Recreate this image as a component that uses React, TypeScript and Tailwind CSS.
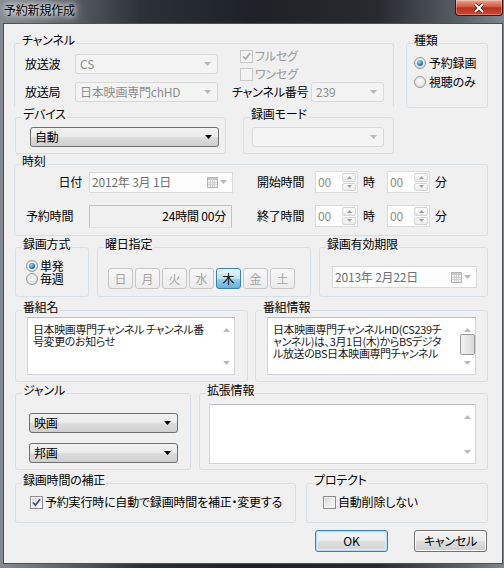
import type { ReactNode } from "react";

function Group({ label, className, children }: { label: string; className: string; children?: ReactNode }) {
  return (
    <fieldset className={`rounded-[3px] border border-[#d5dfe5] ${className}`}>
      <legend className="ml-[6px] px-[1px] pb-[6px] leading-[14px]">{label}</legend>
      {children}
    </fieldset>
  );
}

function Arrow({ dark, up }: { dark?: boolean; up?: boolean }) {
  return (
    <svg width="7" height="4" viewBox="0 0 7 4">
      <path d={up ? "M0 4h7L3.5 0z" : "M0 0h7L3.5 4z"} fill={dark ? "#000" : "#b8b8b8"} />
    </svg>
  );
}

function Combo({ value, className, enabled }: { value?: string; className: string; enabled?: boolean }) {
  return (
    <div
      className={`flex h-[20px] items-center rounded-[3px] border pl-[4px] pr-[6px] ${
        enabled
          ? "border-[#707070] bg-[linear-gradient(#f2f2f2,#ebebeb_50%,#dddddd_50%,#cfcfcf)] text-black"
          : "border-[#d9d9d9] bg-[#f4f4f4] text-[#8d8d8d]"
      } ${className}`}
    >
      <span className="flex-1 leading-[14px]">{value}</span>
      <Arrow dark={enabled} />
    </div>
  );
}

function DatePick({ value, className }: { value: string; className: string }) {
  return (
    <div className={`flex h-[21px] items-center border border-[#d9d9d9] bg-[#fcfcfc] pl-[2px] pr-[5px] text-[#707070] ${className}`}>
      <span className="flex-1 leading-[14px]">{value}</span>
      <svg width="11" height="11" viewBox="0 0 11 11">
        <rect x="0.5" y="0.5" width="10" height="10" fill="#f2f2f2" stroke="#b5b5b5" />
        <rect x="1" y="1" width="9" height="2" fill="#c9c9c9" />
        <path d="M1 5.5h9M1 7.5h9M3.5 3v7M5.5 3v7M7.5 3v7" stroke="#d0d0d0" />
      </svg>
      <span className="ml-[2px] flex">
        <Arrow />
      </span>
    </div>
  );
}

function SpinBtn({ up }: { up?: boolean }) {
  return (
    <div className="flex flex-1 items-center justify-center rounded-[2px] border border-[#d4d4d4] bg-[linear-gradient(#fbfbfb,#ececec)]">
      <svg width="5" height="3" viewBox="0 0 5 3">
        <path d={up ? "M0 3h5L2.5 0z" : "M0 0h5L2.5 3z"} fill="#a0a0a0" />
      </svg>
    </div>
  );
}

function Spin() {
  return (
    <div className="flex h-[22px] w-[43px] border border-[#dcdcdc] bg-white">
      <span className="flex-1 pl-[2px] leading-[20px] text-[#8a8a8a]">00</span>
      <div className="flex w-[16px] flex-col gap-[1px] p-[1px]">
        <SpinBtn up />
        <SpinBtn />
      </div>
    </div>
  );
}

function Radio({ on }: { on?: boolean }) {
  return (
    <span className="flex h-[12px] w-[12px] shrink-0 items-center justify-center rounded-full border border-[#969696] bg-[radial-gradient(circle_at_50%_40%,#ffffff,#d4d4d4)]">
      {on && (
        <span className="h-[6px] w-[6px] rounded-full bg-[radial-gradient(circle_at_40%_35%,#a6e0fa,#1f72b8_60%,#0e4579)]" />
      )}
    </span>
  );
}

function Check({ on, disabled }: { on?: boolean; disabled?: boolean }) {
  return (
    <span
      className={`flex h-[13px] w-[13px] shrink-0 items-center justify-center border ${
        disabled
          ? "border-[#c8c8c8] bg-[#f4f4f4]"
          : "border-[#8f8f8f] bg-[linear-gradient(135deg,#d8d8d8,#ffffff)] shadow-[inset_0_0_0_1px_#f4f4f4]"
      }`}
    >
      {on && (
        <svg width="9" height="9" viewBox="0 0 9 9">
          <path d="M1 4.5L3.5 7.2L8 1.3" fill="none" stroke={disabled ? "#ababab" : "#3b4f8e"} strokeWidth="1.8" />
        </svg>
      )}
    </span>
  );
}

function ScrollBar({ thumb }: { thumb?: boolean }) {
  return (
    <div className="flex w-[16px] shrink-0 flex-col items-center bg-white pb-[9px] pt-[10px]">
      <Arrow up dark={false} />
      {thumb && (
        <div className="mt-[2px] h-[21px] w-[15px] rounded-[2px] border border-[#979797] bg-[linear-gradient(90deg,#f3f3f3,#dadada)]" />
      )}
      <div className="flex-1" />
      <Arrow />
    </div>
  );
}

function Memo({ lines, className, thumb }: { lines: string[]; className: string; thumb?: boolean }) {
  return (
    <div className={`flex border border-[#d0d3d9] border-t-[#b9bcc3] bg-white ${className}`}>
      <div className="min-w-0 flex-1 overflow-hidden whitespace-nowrap pl-[5px] pt-[5px] text-[11px] leading-[12px] tracking-[-0.4px] text-[#1a1a1a]">
        {lines.map((l) => (
          <div key={l}>{l}</div>
        ))}
      </div>
      <ScrollBar thumb={thumb} />
    </div>
  );
}

function DayBtn({ d, on }: { d: string; on?: boolean }) {
  return (
    <div
      className={`flex h-[21px] w-[25px] items-center justify-center rounded-[3px] border ${
        on
          ? "border-[#3c7fb1] bg-[linear-gradient(#e5f4fc,#c4e5f6_50%,#98d1ef_50%,#68b3db)] text-black"
          : "border-[#c6c6c6] bg-[linear-gradient(#f8f8f8,#ececec)] text-[#a3a3a3]"
      }`}
    >
      {d}
    </div>
  );
}

export default function App() {
  return (
    <div className="h-[568px] w-[504px] overflow-hidden bg-[linear-gradient(90deg,#868b91,#5f656b_12%,#2c3137_28%,#1e2227_50%,#272b30_75%,#5c6167_92%,#80868c)] font-['Noto_Sans_CJK_JP',sans-serif] text-[12px] leading-[14px] tracking-[-0.2px] text-black [font-feature-settings:'palt']">
      <div className="flex h-[23px] items-start">
        <span className="pl-[4px] pt-[3px] [text-shadow:0_0_5px_#fff,0_0_9px_#fff,0_0_14px_rgba(255,255,255,0.7)]">予約新規作成</span>
        <div className="ml-auto mr-[1px] flex h-[16px] w-[48px] items-center justify-center rounded-b-[4px] border border-t-0 border-[#3d1510] bg-[linear-gradient(#eaa594,#d25a42_45%,#b8321f_52%,#c9492f)] shadow-[inset_0_0_0_1px_rgba(255,255,255,0.3)]">
          <svg width="12" height="10" viewBox="0 0 12 10">
            <path d="M2 1L10 9M10 1L2 9" stroke="#5a1a10" strokeWidth="3.6" />
            <path d="M2 1L10 9M10 1L2 9" stroke="#fff" strokeWidth="2" />
          </svg>
        </div>
      </div>

      <div className="ml-[3px] flex h-[541px] w-[500px] flex-col border border-[#4a5058] bg-[#f0f0f0] pl-[10px]">
        {/* channel + kind */}
        <div className="mt-[9px] flex">
          <div className="flex w-[380px] flex-col">
            <Group label="チャンネル" className="h-[74px] rounded-b-none border-b-0">
              <div className="flex">
                <div className="flex flex-col gap-[8px] pl-[10px] pt-[1px]">
                  <div className="flex h-[20px] items-center">
                    <span className="w-[50px]">放送波</span>
                    <Combo value="CS" className="w-[143px]" />
                  </div>
                  <div className="flex h-[20px] items-center">
                    <span className="w-[50px]">放送局</span>
                    <Combo value="日本映画専門chHD" className="w-[143px]" />
                  </div>
                </div>
                <div className="ml-[14px] -mt-[6px] flex flex-col">
                  <div className="flex h-[18px] items-center gap-[2px] pl-[8px] text-[#9a9a9a]">
                    <Check on disabled />
                    フルセグ
                  </div>
                  <div className="flex h-[18px] items-center gap-[2px] pl-[8px] text-[#9a9a9a]">
                    <Check disabled />
                    ワンセグ
                  </div>
                  <div className="-mt-[1px] flex h-[20px] items-center">
                    <span className="w-[79px]">チャンネル番号</span>
                    <Combo value="239" className="w-[73px]" />
                  </div>
                </div>
              </div>
            </Group>
            <div className="flex">
              <Group label="デバイス" className="ml-[1px] h-[47px] w-[211px]">
                <div className="pl-[14px]">
                  <Combo enabled value="自動" className="w-[189px]" />
                </div>
              </Group>
              <Group label="録画モード" className="ml-[17px] h-[47px] w-[151px]">
                <div className="pl-[8px]">
                  <Combo className="w-[132px]" />
                </div>
              </Group>
            </div>
          </div>
          <Group label="種類" className="ml-[12px] h-[75px] w-[82px]">
            <div className="flex flex-col pl-[7px]">
              <div className="flex h-[19px] items-center gap-[3px]">
                <Radio on />
                予約録画
              </div>
              <div className="flex h-[19px] items-center gap-[3px]">
                <Radio />
                視聴のみ
              </div>
            </div>
          </Group>
        </div>

        {/* time */}
        <Group label="時刻" className="h-[82px] w-[474px]">
          <div className="-mt-[3px] flex flex-col gap-[12px]">
            <div className="flex h-[22px] items-center">
              <span className="w-[74px] pr-[7px] text-right">日付</span>
              <DatePick value="2012年 3月 1日" className="w-[144px]" />
              <span className="ml-[24px] w-[58px]">開始時間</span>
              <Spin />
              <span className="w-[29px] pl-[5px]">時</span>
              <Spin />
              <span className="pl-[5px]">分</span>
            </div>
            <div className="flex h-[22px] items-center">
              <span className="w-[74px] pl-[11px]">予約時間</span>
              <div className="flex h-[23px] w-[143px] items-center justify-end border border-[#c2c2c2] border-b-[#e2e2e2] bg-[#f0f0f0] pr-[5px]">
                24時間 00分
              </div>
              <span className="ml-[25px] w-[58px]">終了時間</span>
              <Spin />
              <span className="w-[29px] pl-[5px]">時</span>
              <Spin />
              <span className="pl-[5px]">分</span>
            </div>
          </div>
        </Group>

        {/* method / days / expiry */}
        <div className="mt-[1px] flex">
          <Group label="録画方式" className="ml-[1px] h-[60px] w-[74px]">
            <div className="mt-[2px] flex flex-col pl-[10px]">
              <div className="flex h-[13px] items-center gap-[2px] leading-[13px]">
                <Radio on />
                単発
              </div>
              <div className="flex h-[13px] items-center gap-[2px] leading-[13px]">
                <Radio />
                毎週
              </div>
            </div>
          </Group>
          <Group label="曜日指定" className="ml-[8px] h-[60px] w-[214px]">
            <div className="mt-[11px] flex gap-[2px] pl-[10px]">
              <DayBtn d="日" />
              <DayBtn d="月" />
              <DayBtn d="火" />
              <DayBtn d="水" />
              <DayBtn d="木" on />
              <DayBtn d="金" />
              <DayBtn d="土" />
            </div>
          </Group>
          <Group label="録画有効期限" className="ml-[8px] h-[60px] w-[169px]">
            <div className="mt-[9px] pl-[12px]">
              <DatePick value="2013年 2月22日" className="h-[22px] w-[145px]" />
            </div>
          </Group>
        </div>

        {/* program name / info */}
        <div className="mt-[3px] flex">
          <Group label="番組名" className="ml-[1px] h-[82px] w-[233px]">
            <div className="-mt-[3px] pl-[11px]">
              <Memo className="h-[58px] w-[208px]" lines={["日本映画専門チャンネル チャンネル番", "号変更のお知らせ"]} />
            </div>
          </Group>
          <Group label="番組情報" className="ml-[7px] h-[82px] w-[233px]">
            <div className="-mt-[3px] pl-[11px]">
              <Memo
                thumb
                className="h-[58px] w-[209px]"
                lines={["日本映画専門チャンネルHD(CS239チ", "ャンネル)は、3月1日(木)からBSデジタ", "ル放送のBS日本映画専門チャンネル"]}
              />
            </div>
          </Group>
        </div>

        {/* genre / extended */}
        <div className="mt-[1px] flex">
          <Group label="ジャンル" className="ml-[1px] h-[87px] w-[176px]">
            <div className="mt-[10px] flex flex-col gap-[10px] pl-[13px]">
              <Combo enabled value="映画" className="w-[149px]" />
              <Combo enabled value="邦画" className="w-[149px]" />
            </div>
          </Group>
          <Group label="拡張情報" className="ml-[8px] h-[87px] w-[289px]">
            <div className="mt-[1px] pl-[9px]">
              <Memo className="h-[60px] w-[267px]" lines={[]} />
            </div>
          </Group>
        </div>

        {/* correction / protect */}
        <div className="mt-[3px] flex">
          <Group label="録画時間の補正" className="ml-[1px] h-[50px] w-[281px]">
            <div className="flex h-[18px] items-center gap-[2px] pl-[14px]">
              <Check on />
              予約実行時に自動で録画時間を補正・変更する
            </div>
          </Group>
          <Group label="プロテクト" className="ml-[10px] h-[50px] w-[182px]">
            <div className="flex h-[18px] items-center gap-[2px] pl-[16px]">
              <Check />
              自動削除しない
            </div>
          </Group>
        </div>

        <div className="mt-[7px] flex">
          <div className="ml-[301px] flex h-[22px] w-[73px] items-center justify-center rounded-[3px] border border-[#3c7fb1] bg-[linear-gradient(#f4f4f4,#ececec_50%,#dfdfdf_50%,#d3d3d3)] shadow-[inset_0_0_0_1px_#b6e0f6,inset_0_0_0_2px_#d8eef9]">
            OK
          </div>
          <div className="ml-[26px] flex h-[22px] w-[73px] items-center justify-center rounded-[3px] border border-[#707070] bg-[linear-gradient(#f2f2f2,#ebebeb_50%,#dddddd_50%,#cfcfcf)] shadow-[inset_0_0_0_1px_#fcfcfc]">
            キャンセル
          </div>
        </div>
      </div>
    </div>
  );
}
